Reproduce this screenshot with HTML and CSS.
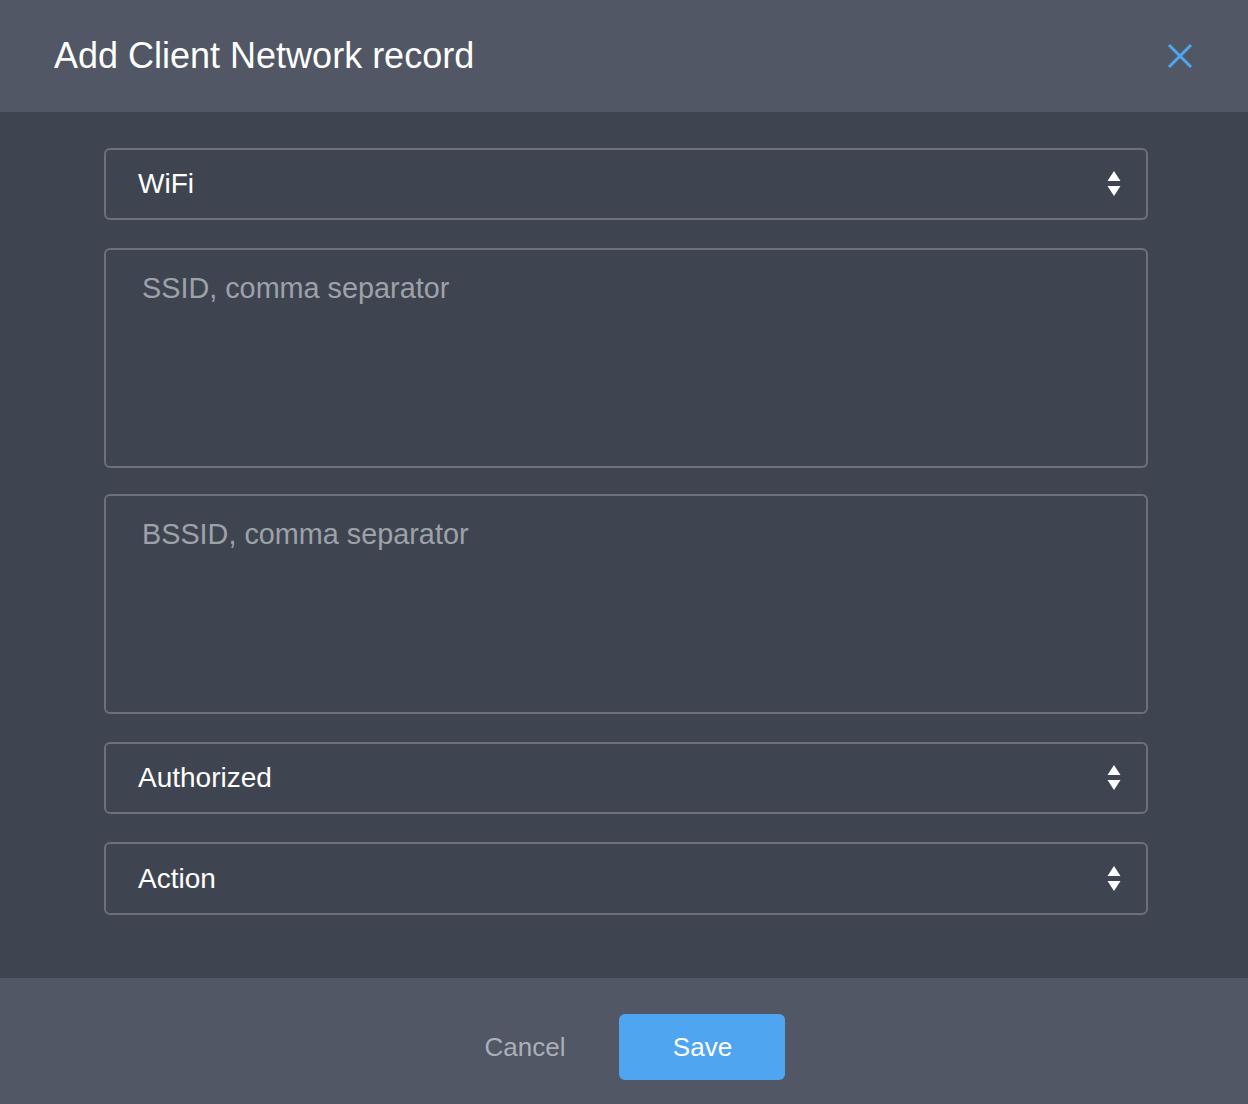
FILE: index.html
```html
<!DOCTYPE html>
<html>
<head>
<meta charset="utf-8">
<link rel="stylesheet" href="styles.css">
</head>
<body>
<div class="modal">
  <header class="modal-header">
    <h1 class="title">Add Client Network record</h1>
    <button class="close" aria-label="Close">
      <svg width="28" height="28" viewBox="0 0 28 28"><path d="M3 3 L25 25 M25 3 L3 25" stroke="#4fa5ef" stroke-width="3" fill="none"/></svg>
    </button>
  </header>
  <main class="modal-body">
    <div class="select">
      <span class="select-value">WiFi</span>
      <span class="arrows"><svg width="14" height="26" viewBox="0 0 14 26"><path d="M7 0 L13.5 10 L0.5 10 Z M7 25 L13.5 15 L0.5 15 Z" fill="#ffffff"/></svg></span>
    </div>
    <div class="textarea"><span class="placeholder">SSID, comma separator</span></div>
    <div class="textarea"><span class="placeholder">BSSID, comma separator</span></div>
    <div class="select">
      <span class="select-value">Authorized</span>
      <span class="arrows"><svg width="14" height="26" viewBox="0 0 14 26"><path d="M7 0 L13.5 10 L0.5 10 Z M7 25 L13.5 15 L0.5 15 Z" fill="#ffffff"/></svg></span>
    </div>
    <div class="select select-last">
      <span class="select-value">Action</span>
      <span class="arrows"><svg width="14" height="26" viewBox="0 0 14 26"><path d="M7 0 L13.5 10 L0.5 10 Z M7 25 L13.5 15 L0.5 15 Z" fill="#ffffff"/></svg></span>
    </div>
  </main>
  <footer class="modal-footer">
    <button class="btn-cancel">Cancel</button>
    <button class="btn-save">Save</button>
  </footer>
</div>
</body>
</html>
```
FILE: styles.css
```css
* { box-sizing: border-box; }
html, body { margin: 0; padding: 0; }
body {
  font-family: "Liberation Sans", Arial, Helvetica, sans-serif;
  background: #3f4550;
  width: 1248px;
  height: 1104px;
  overflow: hidden;
}
.modal {
  display: flex;
  flex-direction: column;
  height: 1104px;
}
.modal-header {
  height: 112px;
  background: #515764;
  display: flex;
  align-items: center;
  justify-content: space-between;
  padding: 0 54px 0 54px;
}
.title {
  margin: 0;
  font-weight: 400;
  font-size: 36px;
  color: #ffffff;
}
.close {
  background: none;
  border: 0;
  padding: 0;
  width: 28px;
  height: 28px;
  display: flex;
  cursor: pointer;
}
.modal-body {
  flex: 1;
  background: #3f4550;
  padding: 36px 100px 0 104px;
  display: flex;
  flex-direction: column;
  gap: 28px;
}
.select {
  height: 72px;
  border: 2px solid #6b707a;
  border-radius: 6px;
  display: flex;
  align-items: center;
  justify-content: space-between;
  padding: 0 25px 0 32px;
}
.select-last { height: 73px; }
.select-value {
  color: #ffffff;
  font-size: 28px;
}
.arrows { display: flex; }
.textarea {
  height: 220px;
  border: 2px solid #6b707a;
  border-radius: 6px;
  padding: 22px 36px;
}
.textarea + .textarea { margin-top: -2px; }
.placeholder {
  color: #9da1a8;
  font-size: 28.8px;
}
.modal-footer {
  height: 126px;
  background: #515764;
  display: flex;
  align-items: flex-start;
  justify-content: center;
  gap: 54px;
  padding: 36px 0 0 22px;
}
.btn-cancel {
  background: none;
  border: 0;
  color: #aab0b8;
  font-family: inherit;
  font-size: 26px;
  padding: 0;
  height: 66px;
}
.btn-save {
  width: 166px;
  height: 66px;
  background: #4fa5ef;
  border: 0;
  border-radius: 6px;
  color: #ffffff;
  font-family: inherit;
  font-size: 26px;
}
```
